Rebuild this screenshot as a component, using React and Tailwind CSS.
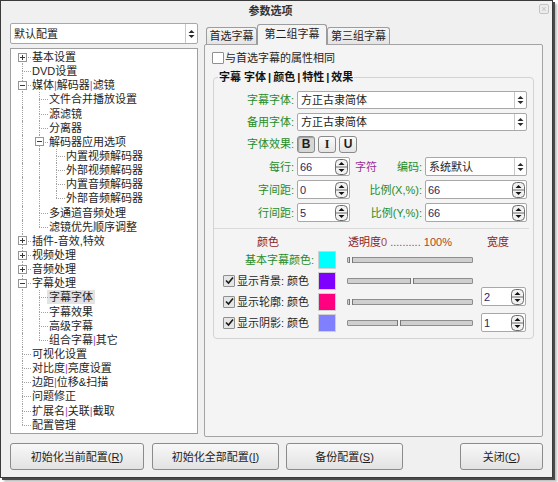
import React from 'react';

const TREE = [
  { t: '基本设置', k: '+' },
  { t: 'DVD设置' },
  {
    t: '媒体|解码器|滤镜',
    c: [
      { t: '文件合并播放设置' },
      { t: '源滤镜' },
      { t: '分离器' },
      {
        t: '解码器应用选项',
        c: [{ t: '内置视频解码器' }, { t: '外部视频解码器' }, { t: '内置音频解码器' }, { t: '外部音频解码器' }],
      },
      { t: '多通道音频处理' },
      { t: '滤镜优先顺序调整' },
    ],
  },
  { t: '插件-音效,特效', k: '+' },
  { t: '视频处理', k: '+' },
  { t: '音频处理', k: '+' },
  {
    t: '字幕处理',
    c: [{ t: '字幕字体', sel: true }, { t: '字幕效果' }, { t: '高级字幕' }, { t: '组合字幕|其它' }],
  },
  { t: '可视化设置' },
  { t: '对比度|亮度设置' },
  { t: '边距|位移&扫描' },
  { t: '问题修正' },
  { t: '扩展名|关联|截取' },
  { t: '配置管理' },
];

function flatten(nodes, level, guides, out) {
  nodes.forEach((n, i) => {
    const last = i === nodes.length - 1;
    const exp = n.c ? '-' : n.k || null;
    out.push({ ...n, level, guides, last, first: level === 0 && i === 0, exp });
    if (n.c) flatten(n.c, level + 1, [...guides, !last], out);
  });
  return out;
}

const ROWS = flatten(TREE, 0, [], []);

function Bars({ text, bar = 'text-[#a44ab8]' }) {
  const parts = text.split('|');
  return parts.map((p, i) => (
    <React.Fragment key={i}>
      {i > 0 && <span className={bar}>|</span>}
      {p}
    </React.Fragment>
  ));
}

function Expander({ plus }) {
  return (
    <div className="relative z-10 ml-[4px] w-[9px] h-[9px] border border-[#959595] bg-white flex items-center justify-center">
      <div className="relative w-[5px] h-[1px] bg-[#3a3a3a]">
        {plus && <div className="absolute left-[2px] top-[-2px] w-[1px] h-[5px] bg-[#3a3a3a]" />}
      </div>
    </div>
  );
}

function TreeRow({ row }) {
  return (
    <div className="flex h-[14.15px] items-stretch">
      {row.guides.map((g, i) => (
        <div key={i} className="relative w-[17px] shrink-0">
          {g && <div className="absolute left-[8px] top-0 bottom-0 border-l border-dotted border-[#a3a3a3]" />}
        </div>
      ))}
      <div className="relative w-[17px] shrink-0 flex items-center">
        {!row.first && <div className="absolute left-[8px] top-0 h-1/2 border-l border-dotted border-[#a3a3a3]" />}
        {!row.last && <div className="absolute left-[8px] top-1/2 bottom-0 border-l border-dotted border-[#a3a3a3]" />}
        <div className="absolute left-[8px] right-0 top-1/2 border-t border-dotted border-[#a3a3a3]" />
        {row.exp && <Expander plus={row.exp === '+'} />}
      </div>
      <div className="flex items-center">
        <span className={`whitespace-nowrap leading-[14px] ${row.sel ? 'bg-[#e3e3e3] px-[2px] ml-[-1px]' : 'pl-[1px]'}`}>
          <Bars text={row.t} />
        </span>
      </div>
    </div>
  );
}

function ComboArrows() {
  return (
    <svg width="7" height="10" viewBox="0 0 7 10">
      <path d="M0.5 4 L3.5 1 L6.5 4 Z" fill="#2a2a2a" />
      <path d="M0.5 6 L3.5 9 L6.5 6 Z" fill="#2a2a2a" />
    </svg>
  );
}

function Combo({ text, className }) {
  return (
    <div className={`flex bg-white border border-[#a8a8a8] rounded-[2px] ${className}`}>
      <span className="flex-1 pl-[3px] flex items-center whitespace-nowrap">{text}</span>
      <span className="w-[12px] border-l border-[#c9c9c9] flex items-center justify-center">
        <ComboArrows />
      </span>
    </div>
  );
}

function SpinButtons() {
  return (
    <svg width="13" height="16" viewBox="0 0 13 16">
      <rect x="0.5" y="0.5" width="12" height="15" rx="4" fill="#f2f2f2" stroke="#6c6c6c" />
      <line x1="1" y1="8" x2="12" y2="8" stroke="#6c6c6c" />
      <path d="M3.5 6 L6.5 3 L9.5 6 Z" fill="#111" />
      <path d="M3.5 10 L6.5 13 L9.5 10 Z" fill="#111" />
    </svg>
  );
}

function Spin({ value, className }) {
  return (
    <div className={`flex items-center bg-white border border-[#a8a8a8] rounded-[2px] pr-[1px] ${className}`}>
      <span className="flex-1 pl-[2px] text-[#2b1f62]">{value}</span>
      <SpinButtons />
    </div>
  );
}

function Check({ checked }) {
  return (
    <div className={`w-[12px] h-[12px] shrink-0 border border-[#8e8f8f] rounded-[1px] flex items-center justify-center ${checked ? 'bg-[#e6e6e6]' : 'bg-white'}`}>
      {checked && (
        <svg width="9" height="9" viewBox="0 0 9 9">
          <path d="M1 4.5 L3.5 7 L8 1.5" fill="none" stroke="#1a1a1a" strokeWidth="1.6" />
        </svg>
      )}
    </div>
  );
}

function Slider({ pos }) {
  return (
    <div className="relative w-[126px] h-[6px] border border-[#8e8e8e] bg-[#cfcfcf] rounded-[1px]">
      <div className="absolute top-[-1px] w-[4px] h-[6px] bg-[#f4f4f4] border-x border-[#777]" style={{ left: pos }} />
    </div>
  );
}

function Swatch({ color }) {
  return <div className="w-[18px] h-[18px] ml-[4px] border border-[#d0d0d0]" style={{ background: color }} />;
}

const green = 'text-[#268c26]';

function FormLabel({ children }) {
  return <div className={`w-[81px] shrink-0 text-right pr-[1px] ${green}`}>{children}</div>;
}

function StyleBtn({ children, pressed, serif }) {
  return (
    <div
      className={`w-[18px] h-[17px] rounded-[3px] border border-[#8a8a8a] flex items-center justify-center font-bold text-[12px] ${
        serif ? "font-['Liberation_Serif',serif]" : ''
      } ${pressed ? 'bg-[#d6d6d6] shadow-[inset_1px_1px_1px_rgba(0,0,0,0.25)]' : 'bg-linear-to-b from-[#fbfbfb] to-[#e4e4e4]'}`}
    >
      {children}
    </div>
  );
}

function ColorRow({ label, checked, color, pos, spin, spinUp }) {
  return (
    <div className="flex items-center h-[21px]">
      {checked === undefined ? (
        <div className={`w-[100px] shrink-0 text-right ${green}`}>{label}</div>
      ) : (
        <div className="w-[100px] shrink-0 flex items-center pl-[9px] gap-[2px]">
          <Check checked />
          <span className="whitespace-nowrap">{label}</span>
        </div>
      )}
      <Swatch color={color} />
      <div className="ml-[11px]">
        <Slider pos={pos} />
      </div>
      {spin && <Spin value={spin} className={`ml-[8px] w-[45px] h-[19px] ${spinUp ? 'mb-[10px]' : ''}`} />}
    </div>
  );
}

function Btn({ children, className }) {
  return (
    <button className={`h-[27px] rounded-[3px] border border-[#8b8b8b] bg-linear-to-b from-[#f8f8f8] to-[#e2e2e2] text-[11px] ${className}`}>
      {children}
    </button>
  );
}

export default function App() {
  return (
    <div className="w-[558px] h-[482px] bg-white">
      <div className="w-[553px] h-[478px] border border-[#3b3b3b] bg-[#f0f0f0] shadow-[2px_2px_0_#4a4a4a,4px_4px_2px_rgba(0,0,0,0.25)] flex flex-col text-[11px] leading-[14px] text-[#1e1e1e] font-['Liberation_Sans','Noto_Sans_CJK_SC',sans-serif]">
        {/* title bar */}
        <div className="relative h-[20px] shrink-0 flex items-center justify-center pr-[12px]">
          <span className="font-bold text-[#333]">参数选项</span>
          <div className="absolute right-[3px] top-[3px] w-[10px] h-[10px] border border-[#c4c4c4] rounded-[2px] bg-[#ececec] flex items-center justify-center text-[9px] leading-none text-[#c0c0c0]">
            ×
          </div>
        </div>

        <div className="flex pl-[9px] pt-[2px] gap-[6px] h-[416px] shrink-0">
          {/* left column */}
          <div className="w-[188px] flex flex-col">
            <Combo text="默认配置" className="h-[21px]" />
            <div className="mt-[4px] h-[386px] bg-white border border-[#a0a0a0] pl-[3px] pt-[1px]">
              {ROWS.map((r, i) => (
                <TreeRow key={i} row={r} />
              ))}
            </div>
          </div>

          {/* right column */}
          <div className="w-[339px] flex flex-col">
            <div className="h-[21px] flex items-end pl-[2px]">
              <div className="w-[51px] h-[17px] border border-b-0 border-[#9c9c9c] rounded-t-[3px] bg-linear-to-b from-[#f6f6f6] to-[#e4e4e4] flex items-center justify-center">
                首选字幕
              </div>
              <div className="relative z-10 w-[70px] h-[21px] mb-[-1px] border border-b-0 border-[#9c9c9c] rounded-t-[3px] bg-[#f4f4f4] flex items-center justify-center pb-[2px]">
                第二组字幕
              </div>
              <div className="w-[63px] h-[17px] border border-b-0 border-[#9c9c9c] rounded-t-[3px] bg-linear-to-b from-[#f6f6f6] to-[#e4e4e4] flex items-center justify-center">
                第三组字幕
              </div>
            </div>
            <div className="h-[393px] border border-[#a3a3a3] rounded-[2px] bg-[#f4f4f4] flex flex-col">
              <div className="mt-[7px] ml-[7px] flex items-center gap-[1px] h-[12px]">
                <Check />
                <span>与首选字幕的属性相同</span>
              </div>

              <fieldset className="mt-[6px] ml-[8px] w-[321px] border border-[#d3d3d3] rounded-[4px] pb-[5px]">
                <legend className="ml-[4px] px-[1px] font-bold text-[#111] whitespace-nowrap">
                  字幕 字体<span className="mx-[2px]">|</span>颜色<span className="mx-[2px]">|</span>特性
                  <span className="mx-[2px]">|</span>效果
                </legend>

                <div className="mt-[7px] flex items-center h-[18px] gap-[2px]">
                  <FormLabel>字幕字体:</FormLabel>
                  <Combo text="方正古隶简体" className="w-[230px] h-[18px]" />
                </div>
                <div className="mt-[4px] flex items-center h-[18px] gap-[2px]">
                  <FormLabel>备用字体:</FormLabel>
                  <Combo text="方正古隶简体" className="w-[230px] h-[18px]" />
                </div>
                <div className="mt-[4px] flex items-center h-[18px] gap-[2px]">
                  <FormLabel>字体效果:</FormLabel>
                  <div className="flex gap-[3px]">
                    <StyleBtn pressed>B</StyleBtn>
                    <StyleBtn serif>I</StyleBtn>
                    <StyleBtn>U</StyleBtn>
                  </div>
                </div>
                <div className="mt-[4px] flex items-center h-[19px] gap-[2px]">
                  <FormLabel>每行:</FormLabel>
                  <Spin value="66" className="w-[53px] h-[19px]" />
                  <div className="w-[71px] flex justify-between pl-[3px] pr-[1px]">
                    <span className="text-[#9b2c9b]">字符</span>
                    <span className={green}>编码:</span>
                  </div>
                  <Combo text="系统默认" className="w-[102px] h-[19px]" />
                </div>
                <div className="mt-[4px] flex items-center h-[19px] gap-[2px]">
                  <FormLabel>字间距:</FormLabel>
                  <Spin value="0" className="w-[53px] h-[19px]" />
                  <div className={`w-[71px] text-right pr-[1px] ${green}`}>比例(X,%):</div>
                  <Spin value="66" className="w-[102px] h-[19px]" />
                </div>
                <div className="mt-[4px] flex items-center h-[19px] gap-[2px]">
                  <FormLabel>行间距:</FormLabel>
                  <Spin value="5" className="w-[53px] h-[19px]" />
                  <div className={`w-[71px] text-right pr-[1px] ${green}`}>比例(Y,%):</div>
                  <Spin value="66" className="w-[102px] h-[19px]" />
                </div>

                <div className="mt-[6px] mr-[4px] border-t border-[#dadada]" />

                <div className="mt-[6px] h-[14px] flex items-center">
                  <div className="w-[100px] pl-[8px] text-center text-[#8b1e1e]">颜色</div>
                  <div className="ml-[34px] whitespace-nowrap">
                    <span className="text-[#8b1e1e]">透明度</span>
                    <span className="text-[#a8481c]">0 .......... 100%</span>
                  </div>
                  <div className="ml-auto mr-[24px] text-[#8b1e1e]">宽度</div>
                </div>

                <ColorRow label="基本字幕颜色:" color="#00ffff" pos="1px" />
                <ColorRow label="显示背景: 颜色" checked color="#8000ff" pos="62px" />
                <ColorRow label="显示轮廓: 颜色" checked color="#ff0080" pos="1px" spin="2" spinUp />
                <ColorRow label="显示阴影: 颜色" checked color="#8080ff" pos="49px" spin="1" />
              </fieldset>
            </div>
          </div>
        </div>

        {/* bottom buttons */}
        <div className="mt-[6px] flex pl-[9px] pr-[9px]">
          <Btn className="w-[134px]">
            初始化当前配置(<u>R</u>)
          </Btn>
          <Btn className="ml-[8px] w-[127px]">
            初始化全部配置(<u>I</u>)
          </Btn>
          <Btn className="ml-[7px] w-[117px]">
            备份配置(<u>S</u>)
          </Btn>
          <Btn className="ml-auto w-[83px]">
            关闭(<u>C</u>)
          </Btn>
        </div>
      </div>
    </div>
  );
}
